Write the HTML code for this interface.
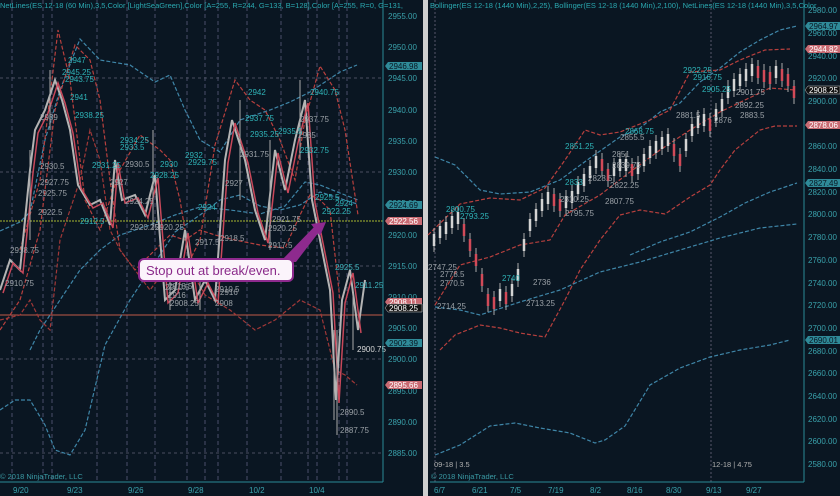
<!DOCTYPE html>
<html><head><meta charset="utf-8"><style>
html,body{margin:0;padding:0;background:#0b1724;}
svg{display:block;font-family:"Liberation Sans",sans-serif;}
</style></head><body>
<svg width="840" height="496" viewBox="0 0 840 496" xmlns="http://www.w3.org/2000/svg">
<rect x="0" y="0" width="840" height="496" fill="#0a1622"/>
<!-- LEFT PANE -->
<g stroke="#4a4f6a" stroke-width="1" stroke-dasharray="4,3">
<line x1="12" y1="0" x2="12" y2="482"/><line x1="43" y1="0" x2="43" y2="482"/><line x1="52" y1="0" x2="52" y2="482"/>
<line x1="97" y1="0" x2="97" y2="482"/><line x1="127" y1="0" x2="127" y2="482"/><line x1="155" y1="0" x2="155" y2="482"/>
<line x1="187" y1="0" x2="187" y2="482"/><line x1="205" y1="0" x2="205" y2="482"/><line x1="218" y1="0" x2="218" y2="482"/>
<line x1="247" y1="0" x2="247" y2="482"/><line x1="281" y1="0" x2="281" y2="482"/><line x1="308" y1="0" x2="308" y2="482"/>
<line x1="317" y1="0" x2="317" y2="482"/><line x1="339" y1="0" x2="339" y2="482"/><line x1="347" y1="0" x2="347" y2="482"/>
</g>
<g stroke="#4a4f60" stroke-dasharray="3,3">
<line x1="0" y1="78" x2="383" y2="78"/><line x1="0" y1="172" x2="383" y2="172"/><line x1="0" y1="266" x2="383" y2="266"/>
<line x1="0" y1="359" x2="383" y2="359"/><line x1="0" y1="453" x2="383" y2="453"/>
</g>
<line x1="0" y1="221" x2="383" y2="221" stroke="#a8b830" stroke-width="1" stroke-dasharray="2,1"/>
<line x1="0" y1="315" x2="383" y2="315" stroke="#c05a48" stroke-width="1"/>
<g fill="none" stroke-dasharray="4,2" stroke-width="1.2">
<polyline stroke="#3f86a8" points="0,231 20,222 30,212 45,140 60,90 80,39 100,60 130,65 155,82 170,75 185,110 200,140 220,152 240,120 270,110 290,102 310,92 340,72 357,65"/>
<polyline stroke="#3f86a8" points="0,410 15,400 30,400 45,425 55,450 70,455 85,430 105,345 130,300 150,270 175,232 200,215 220,200 240,195 260,206 280,210 300,205 320,192 357,204"/>
<polyline stroke="#3f86a8" points="30,350 40,330 60,300 80,270 100,250 120,235 150,225 175,215 200,207 230,210 260,214 285,206 305,182 320,185 345,195 358,200"/>
<polyline stroke="#b8403e" points="20,250 40,180 58,30 70,80 85,200 100,230 120,170 140,135 160,150 170,160 180,200 190,260 200,240 215,145 235,80 250,100 265,110 280,140 295,180 305,120 320,66 335,90 345,130 358,215"/>
<polyline stroke="#b8403e" points="0,330 20,300 40,230 55,110 75,45 90,60 100,100 110,180 120,250 135,270 150,255 170,235 185,240 200,230 215,235 235,240 260,245 285,248 300,215 310,195 320,200 330,210 340,300"/>
<polyline stroke="#a03838" points="0,320 20,315 30,300 40,320 50,330 60,240 80,180 90,130 100,160 110,230 120,250 150,290 165,270 185,260 205,295 230,310 255,330 275,320 300,300 320,310 335,370 345,375 357,385"/>
</g>
<polyline fill="none" stroke="#b4b4b4" stroke-width="2" points="0,290 10,260 20,270 30,170 35,130 45,110 55,80 62,100 70,130 78,185 90,205 100,200 110,225 115,160 122,200 135,195 145,215 155,175 165,300 175,290 185,230 195,300 205,280 215,300 225,160 232,120 245,160 255,210 265,240 275,150 285,190 295,140 305,100 312,200 320,240 330,290 336,400 342,300 350,270 358,330 365,280"/>
<polyline fill="none" stroke="#c8485a" stroke-width="1.5" points="3,293 13,263 23,273 33,173 38,133 48,113 58,83 65,103 73,133 81,188 93,208 103,203 113,228 118,163 125,203 138,198 148,218 158,178 168,303 178,293 188,233 198,303 208,283 218,303 228,163 235,123 248,163 258,213 268,243 278,153 288,193 298,143 308,103 315,203 323,243 333,293 339,403 345,303 353,273 361,333"/>
<g stroke="#aaa" stroke-width="1">
<line x1="334" y1="330" x2="334" y2="420"/><line x1="337" y1="330" x2="337" y2="435"/><line x1="353" y1="290" x2="353" y2="350"/><line x1="153" y1="130" x2="153" y2="230"/><line x1="300" y1="80" x2="300" y2="160"/><line x1="240" y1="100" x2="240" y2="200"/>
<line x1="50" y1="70" x2="50" y2="130"/><line x1="30" y1="150" x2="30" y2="240"/><line x1="170" y1="260" x2="170" y2="310"/><line x1="200" y1="260" x2="200" y2="310"/><line x1="270" y1="140" x2="270" y2="250"/>
</g>
<g font-size="8" fill="#9aa0a6">
<text x="40" y="120">2939</text><text x="40" y="169">2930.5</text><text x="40" y="185">2927.75</text><text x="38" y="196">2925.75</text><text x="38" y="215">2922.5</text>
<text x="125" y="167">2930.5</text><text x="110" y="185">2927</text><text x="125" y="204">2924.25</text><text x="130" y="230">2920.25</text><text x="155" y="230">2920.25</text>
<text x="225" y="186">2927</text><text x="240" y="157">2931.75</text><text x="272" y="222">2921.75</text><text x="268" y="231">2920.25</text><text x="268" y="248">2917.5</text><text x="300" y="122">2937.75</text><text x="298" y="138">2935</text>
<text x="220" y="241">2918.5</text><text x="195" y="245">2917.5</text><text x="220" y="295">2916</text><text x="168" y="298">2916</text><text x="168" y="289">2918.5</text>
<text x="165" y="290">2910.5</text><text x="170" y="306">2908.25</text><text x="215" y="306">2908</text><text x="215" y="292">2910.5</text>
<text x="357" y="352" fill="#d8d8d8">2900.75</text><text x="340" y="415">2890.5</text><text x="340" y="433">2887.75</text>
<text x="10" y="253">2918.75</text><text x="5" y="286">2910.75</text><text x="335" y="270" fill="#3cb0b8">2925.5</text><text x="355" y="288" fill="#3cb0b8">2911.25</text>
</g>
<g font-size="8" fill="#2fb4b8">
<text x="68" y="63">2947</text><text x="62" y="75">2945.25</text><text x="65" y="82">2943.75</text><text x="70" y="100">2941</text><text x="75" y="118">2938.25</text><text x="120" y="143">2934.25</text><text x="120" y="150">2933.5</text>
<text x="92" y="168">2931.25</text><text x="160" y="167">2930</text><text x="150" y="178">2928.25</text><text x="185" y="158">2932</text><text x="188" y="165">2929.75</text>
<text x="248" y="95">2942</text><text x="245" y="121">2937.75</text><text x="250" y="137">2935.25</text><text x="278" y="134">2935.5</text><text x="310" y="95">2940.75</text>
<text x="300" y="153">2932.75</text><text x="198" y="210">2924</text><text x="315" y="200">2925.5</text><text x="335" y="206">2924</text><text x="322" y="214">2922.25</text>
<text x="80" y="224">2912.5</text>
</g>
<line x1="383" y1="0" x2="383" y2="482" stroke="#2a8a96"/>
<g font-size="8" fill="#3aa2ac">
<text x="388" y="19">2955.00</text><text x="388" y="50">2950.00</text><text x="388" y="81">2945.00</text><text x="388" y="113">2940.00</text><text x="388" y="144">2935.00</text><text x="388" y="175">2930.00</text><text x="388" y="206">2925.00</text><text x="388" y="238">2920.00</text><text x="388" y="269">2915.00</text><text x="388" y="300">2910.00</text><text x="388" y="331">2905.00</text><text x="388" y="362">2900.00</text><text x="388" y="394">2895.00</text><text x="388" y="425">2890.00</text><text x="388" y="456">2885.00</text>
</g>
<g font-size="8">
<path d="M385,66 l3,-4 h34 v8 h-34z" fill="#2f8a98"/><text x="389" y="69" fill="#0a1622">2946.98</text>
<path d="M385,205 l3,-4 h34 v8 h-34z" fill="#2f8a98"/><text x="389" y="208" fill="#0a1622">2924.69</text>
<path d="M385,221 l3,-4 h34 v8 h-34z" fill="#c86a72"/><text x="389" y="224" fill="#fff">2922.56</text>
<path d="M385,302 l3,-4 h34 v8 h-34z" fill="#c86a72"/><text x="389" y="305" fill="#fff">2908.11</text>
<path d="M385,308 l3,-4 h34 v8 h-34z" fill="#111" stroke="#ccc" stroke-width=".5"/><text x="389" y="311" fill="#fff">2908.25</text>
<path d="M385,343 l3,-4 h34 v8 h-34z" fill="#2f8a98"/><text x="389" y="346" fill="#0a1622">2902.39</text>
<path d="M385,385 l3,-4 h34 v8 h-34z" fill="#c86a72"/><text x="389" y="388" fill="#fff">2895.66</text>
</g>
<text x="0" y="8" font-size="7.5" fill="#2aa8b0">NetLines(ES 12-18 (60 Min),3,5,Color [LightSeaGreen],Color [A=255, R=244, G=133, B=128],Color [A=255, R=0, G=131,</text>
<text x="0" y="479" font-size="7.5" fill="#3a9aa4">© 2018 NinjaTrader, LLC</text>
<line x1="0" y1="482" x2="383" y2="482" stroke="#2a8a96"/>
<g font-size="8" fill="#3aa2ac"><text x="13" y="493">9/20</text><text x="67" y="493">9/23</text><text x="128" y="493">9/26</text><text x="188" y="493">9/28</text><text x="249" y="493">10/2</text><text x="309" y="493">10/4</text></g>
<polygon points="280,262 296,262 322,228 315,226" fill="#8e2a8e"/>
<polygon points="311,224 326,222 320,236" fill="#8e2a8e"/>
<rect x="139" y="259" width="154" height="22" rx="5" fill="#fbf4fb" stroke="#8e2a8e" stroke-width="2"/>
<text x="146" y="275" font-size="13" fill="#8a2a8a">Stop out at break/even.</text>
<rect x="423" y="0" width="5" height="496" fill="#cfcfcf"/>
<!-- RIGHT PANE -->
<g stroke="#55566a" stroke-dasharray="2,2"><line x1="435" y1="0" x2="435" y2="482"/><line x1="711" y1="0" x2="711" y2="482"/></g>
<g fill="none" stroke-dasharray="4,2" stroke-width="1.2">
<polyline stroke="#3f86a8" points="435,157 455,165 480,190 500,194 530,192 560,180 590,158 620,137 640,128 660,112 680,103 700,82 720,68 740,52 760,40 780,30 797,26"/>
<polyline stroke="#b8403e" points="428,235 460,204 490,198 520,200 545,188 565,160 585,130 600,135 620,132 650,120 670,110 690,72 720,70 740,60 765,50 790,49"/>
<polyline stroke="#b8403e" points="435,305 460,265 490,257 520,245 550,240 565,215 600,195 630,172 660,150 690,130 720,112 745,100 770,88 795,90"/>
<polyline stroke="#b8403e" points="440,350 455,335 480,325 500,328 520,333 545,337 565,300 580,270 600,240 620,215 640,210 665,214 690,197 710,185 720,170 735,150 760,130 775,126 797,126"/>
<polyline stroke="#3f86a8" points="630,255 660,242 690,232 720,217 745,203 770,192 797,183"/>
<polyline stroke="#3f86a8" points="435,455 460,445 490,426 515,423 540,428 570,433 595,443 605,440 625,426 650,385 680,368 710,357 740,350 770,345 790,340"/>
<polyline stroke="#3f86a8" points="435,307 460,310 480,315 520,302 560,290 600,272 640,262 680,250 720,238 760,228 797,224"/>
</g>
<path fill="none" stroke="#aaa" stroke-width="1" d="M434 228V252M440 220V244M446 216V240M452 210V234M458 206V230M464 218V242M470 233V257M476 248V272M482 268V292M488 288V312M494 291V315M500 283V307M506 286V310M512 278V302M518 263V287M524 233V257M530 213V237M536 203V227M542 193V217M548 186V210M554 188V212M560 193V217M566 190V214M572 185V209M578 176V200M584 168V192M590 160V184M596 150V174M602 153V177M608 163V187M614 158V182M620 153V177M626 153V177M632 158V182M638 156V180M644 148V172M650 140V164M656 135V159M662 131V155M668 128V152M674 138V162M680 148V172M686 133V157M692 118V142M698 110V134M704 108V132M710 113V137M716 103V127M722 93V117M728 80V104M734 73V97M740 68V92M746 63V87M752 58V82M758 60V84M764 64V88M770 66V90M776 60V84M782 63V87M788 68V92M794 80V104"/>
<path fill="none" stroke="#d4d4d4" stroke-width="2.5" d="M434 234V246M440 226V238M446 222V234M452 216V228M458 212V224M500 289V301M512 284V296M518 269V281M524 239V251M530 219V231M536 209V221M542 199V211M548 192V204M566 196V208M572 191V203M578 182V194M584 174V186M590 166V178M596 156V168M614 164V176M620 159V171M626 159V171M638 162V174M644 154V166M650 146V158M656 141V153M662 137V149M668 134V146M686 139V151M692 124V136M698 116V128M704 114V126M716 109V121M722 99V111M728 86V98M734 79V91M740 74V86M746 69V81M752 64V76M776 66V78"/>
<path fill="none" stroke="#d24a58" stroke-width="2.5" d="M464 224V236M470 239V251M476 254V266M482 274V286M488 294V306M494 297V309M506 292V304M554 194V206M560 199V211M602 159V171M608 169V181M632 164V176M674 144V156M680 154V166M710 119V131M758 66V78M764 70V82M770 72V84M782 69V81M788 74V86M794 86V98"/>
<g font-size="8" fill="#9aa0a6">
<text x="440" y="277">2778.5</text><text x="440" y="286">2770.5</text><text x="428" y="270">2747.25</text><text x="437" y="309">2714.25</text><text x="533" y="285">2736</text><text x="526" y="306">2713.25</text>
<text x="560" y="202">2810.25</text><text x="565" y="216">2795.75</text><text x="610" y="188">2822.25</text><text x="605" y="204">2807.75</text><text x="612" y="168">2839.75</text>
<text x="612" y="157">2851</text><text x="620" y="140">2855.5</text><text x="676" y="118">2881.5</text><text x="736" y="95">2901.75</text><text x="735" y="108">2892.25</text><text x="740" y="118">2883.5</text>
<text x="714" y="123">2876</text><text x="588" y="181">2828.5</text>
</g>
<g font-size="8" fill="#2fb4b8">
<text x="565" y="149">2851.25</text><text x="565" y="185">2833</text><text x="446" y="212">2800.75</text><text x="460" y="219">2793.25</text><text x="625" y="134">2868.75</text>
<text x="683" y="73">2922.25</text><text x="693" y="80">2916.75</text><text x="702" y="92">2905.25</text><text x="502" y="281">2740</text>
</g>
<text x="430" y="8" font-size="7.5" fill="#2aa8b0">Bollinger(ES 12-18 (1440 Min),2,25), Bollinger(ES 12-18 (1440 Min),2,100), NetLines(ES 12-18 (1440 Min),3,5,Color</text>
<text x="434" y="467" font-size="7.5" fill="#b0b0b0">09-18 | 3.5</text>
<text x="712" y="467" font-size="7.5" fill="#b0b0b0">12-18 | 4.75</text>
<text x="431" y="479" font-size="7.5" fill="#3a9aa4">© 2018 NinjaTrader, LLC</text>
<line x1="430" y1="482" x2="804" y2="482" stroke="#2a8a96"/>
<line x1="804" y1="0" x2="804" y2="482" stroke="#2a8a96"/>
<g font-size="8" fill="#3aa2ac">
<text x="434" y="493">6/7</text><text x="472" y="493">6/21</text><text x="510" y="493">7/5</text><text x="548" y="493">7/19</text><text x="590" y="493">8/2</text><text x="627" y="493">8/16</text><text x="666" y="493">8/30</text><text x="706" y="493">9/13</text><text x="746" y="493">9/27</text>
</g>
<g font-size="8" fill="#3aa2ac">
<text x="808" y="13">2980.00</text><text x="808" y="36">2960.00</text><text x="808" y="59">2940.00</text><text x="808" y="81">2920.00</text><text x="808" y="104">2900.00</text><text x="808" y="127">2880.00</text><text x="808" y="149">2860.00</text><text x="808" y="172">2840.00</text><text x="808" y="195">2820.00</text><text x="808" y="217">2800.00</text><text x="808" y="240">2780.00</text><text x="808" y="263">2760.00</text><text x="808" y="286">2740.00</text><text x="808" y="308">2720.00</text><text x="808" y="331">2700.00</text><text x="808" y="354">2680.00</text><text x="808" y="376">2660.00</text><text x="808" y="399">2640.00</text><text x="808" y="422">2620.00</text><text x="808" y="444">2600.00</text><text x="808" y="467">2580.00</text>
</g>
<g font-size="8">
<path d="M805,26 l3,-4 h32 v8 h-32z" fill="#2f8a98"/><text x="809" y="29" fill="#0a1622">2964.97</text>
<path d="M805,49 l3,-4 h32 v8 h-32z" fill="#c86a72"/><text x="809" y="52" fill="#fff">2944.82</text>
<path d="M805,90 l3,-4 h32 v8 h-32z" fill="#111" stroke="#ccc" stroke-width=".5"/><text x="809" y="93" fill="#fff">2908.25</text>
<path d="M805,125 l3,-4 h32 v8 h-32z" fill="#c86a72"/><text x="809" y="128" fill="#fff">2878.06</text>
<path d="M805,183 l3,-4 h32 v8 h-32z" fill="#2f8a98"/><text x="809" y="186" fill="#0a1622">2827.49</text>
<path d="M805,340 l3,-4 h32 v8 h-32z" fill="#2f8a98"/><text x="809" y="343" fill="#0a1622">2690.01</text>
</g>
</svg>
</body></html>
